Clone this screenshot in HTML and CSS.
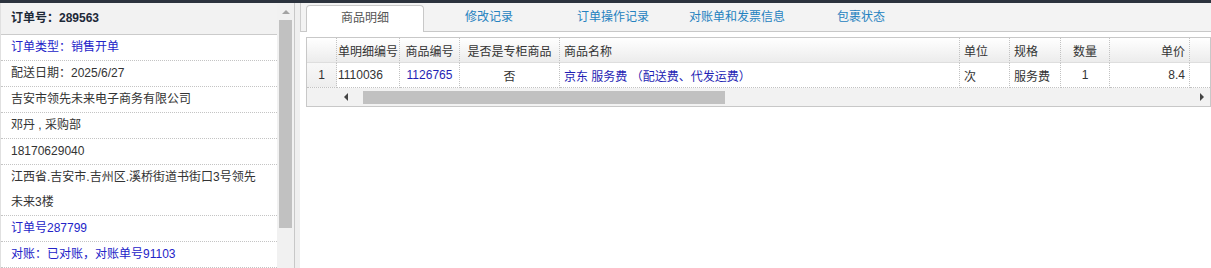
FILE: index.html
```html
<!DOCTYPE html>
<html lang="zh-CN">
<head>
  <meta charset="UTF-8" />
  <title>订单详情</title>
  <link rel="stylesheet" href="styles.css">
</head>
<body>
  <div class="topbar"></div>
  <div class="page">
    <aside class="side">
      <div class="info">
        <div class="info-head">订单号：289563</div>
        <div class="info-row link">订单类型：销售开单</div>
        <div class="info-row">配送日期：2025/6/27</div>
        <div class="info-row">吉安市领先未来电子商务有限公司</div>
        <div class="info-row">邓丹 , 采购部</div>
        <div class="info-row">18170629040</div>
        <div class="info-row">江西省.吉安市.吉州区.溪桥街道书街口3号领先未来3楼</div>
        <div class="info-row link">订单号287799</div>
        <div class="info-row link">对账：已对账，对账单号91103</div>
      </div>
      <div class="vscroll">
        <span class="arrow-up"></span>
        <div class="vthumb"></div>
      </div>
    </aside>
    <div class="splitter"></div>
    <main class="main">
      <ul class="tabs">
        <li class="active">商品明细</li>
        <li>修改记录</li>
        <li>订单操作记录</li>
        <li>对账单和发票信息</li>
        <li>包裹状态</li>
      </ul>

      <div class="grid">
        <table>
          <colgroup>
            <col class="w-rn"><col class="w-63"><col class="w-60"><col class="w-100">
            <col class="w-400"><col class="w-50"><col class="w-51"><col class="w-49">
            <col class="w-80"><col>
          </colgroup>
          <thead>
            <tr>
              <th class="rn"></th>
              <th class="clip">单明细编号</th>
              <th class="center">商品编号</th>
              <th class="center">是否是专柜商品</th>
              <th>商品名称</th>
              <th>单位</th>
              <th>规格</th>
              <th class="center">数量</th>
              <th class="right">单价</th>
              <th class="filler"></th>
            </tr>
          </thead>
          <tbody>
            <tr>
              <td class="rn">1</td>
              <td class="clip">1110036</td>
              <td class="center link">1126765</td>
              <td class="center">否</td>
              <td class="link">京东 服务费 （配送费、代发运费）</td>
              <td>次</td>
              <td>服务费</td>
              <td class="center">1</td>
              <td class="right">8.4</td>
              <td class="filler"></td>
            </tr>
          </tbody>
        </table>
        <div class="hscroll">
          <div class="hs-gap"></div>
          <div class="hs-btn"><span class="arrow-left"></span></div>
          <div class="hs-track"><div class="hthumb"></div></div>
          <div class="hs-btn"><span class="arrow-right"></span></div>
        </div>
      </div>
    </main>
  </div>
</body>
</html>
```

FILE: styles.css
```css
body {
  margin: 0;
  font-family: "Liberation Sans", "Noto Sans CJK SC", sans-serif;
  font-size: 12px;
  color: #333;
  background: #fff;
  overflow: hidden;
}
.topbar {
  height: 3px;
  background: #2c333e;
}
.page {
  display: flex;
  height: 265px;
}

/* left info panel */
.side {
  display: flex;
  width: 294px;
}
.info {
  width: 277px;
  box-sizing: border-box;
  border-left: 1px solid #e0e0e0;
}
.info-head {
  height: 31px;
  line-height: 31px;
  padding: 0 10px;
  background: #f2f2f2;
  border-bottom: 1px solid #cbcbcb;
  font-weight: bold;
  color: #1d2938;
}
.info-row {
  line-height: 25px;
  padding: 0 11px 0 10px;
  border-bottom: 1px dotted #c4c4c4;
}
.link {
  color: #2323c8;
}
.vscroll {
  width: 17px;
  background: #f1f1f1;
  display: flex;
  flex-direction: column;
  align-items: center;
}
.arrow-up {
  margin-top: 7px;
  width: 0;
  height: 0;
  border-left: 4px solid transparent;
  border-right: 4px solid transparent;
  border-bottom: 4px solid #a3a3a3;
}
.vthumb {
  margin-top: 6px;
  width: 13px;
  height: 208px;
  background: #c1c1c1;
}
.splitter {
  width: 6px;
  box-sizing: border-box;
  border-left: 1px solid #c8c8c8;
  background: #efefef;
}

/* main area */
.main {
  flex: 1;
}
.tabs {
  display: flex;
  align-items: flex-end;
  height: 28px;
  margin: 0;
  padding: 0 0 0 5px;
  list-style: none;
  background: #f3f3f3;
  border-left: 1px solid #cdcdcd;
  border-bottom: 1px solid #c8c8c8;
}
.tabs li {
  width: 118px;
  height: 27px;
  box-sizing: border-box;
  margin: 0 6px -1px 0;
  line-height: 24px;
  text-align: center;
  color: #2582c0;
  cursor: pointer;
}
.tabs li.active {
  background: #fff;
  color: #555;
  border: 1px solid #c8c8c8;
  border-bottom: none;
  border-radius: 4px 4px 0 0;
}

.grid {
  margin: 5px 0 0 6px;
  border: 1px solid #c8c8c8;
}
.grid table {
  width: 100%;
  border-collapse: separate;
  border-spacing: 0;
  table-layout: fixed;
}
.w-rn { width: 30px; }
.w-63 { width: 63px; }
.w-60 { width: 60px; }
.w-100 { width: 100px; }
.w-400 { width: 400px; }
.w-50 { width: 50px; }
.w-51 { width: 51px; }
.w-49 { width: 49px; }
.w-80 { width: 80px; }
.grid th,
.grid td {
  height: 24px;
  padding: 0 4px;
  text-align: left;
  white-space: nowrap;
  overflow: hidden;
  border-right: 1px dotted #c2c2c2;
}
.grid th {
  font-weight: normal;
  color: #333;
  background: linear-gradient(#fff, #ececec);
  border-bottom: 1px solid #dedede;
}
.grid td {
  border-bottom: 1px dotted #c2c2c2;
}
.grid td.rn {
  background: linear-gradient(#f8f8f8, #eeeeee);
}
.grid .rn,
.grid .center {
  text-align: center;
}
.grid .right {
  text-align: right;
}
.grid .clip {
  padding: 0 0 0 1px;
}
.grid .filler {
  border-right: none;
}
.grid td.link {
  color: #1f1fb4;
}

.hscroll {
  display: flex;
  height: 18px;
  background: #f2f2f2;
}
.hs-gap {
  width: 30px;
}
.hs-btn {
  width: 17px;
  display: flex;
  align-items: center;
  justify-content: center;
}
.hs-track {
  flex: 1;
}
.hthumb {
  margin: 3px 0 0 9px;
  width: 362px;
  height: 13px;
  background: #c1c1c1;
}
.arrow-left {
  width: 0;
  height: 0;
  border-top: 4px solid transparent;
  border-bottom: 4px solid transparent;
  border-right: 4px solid #444;
}
.arrow-right {
  width: 0;
  height: 0;
  border-top: 4px solid transparent;
  border-bottom: 4px solid transparent;
  border-left: 4px solid #444;
}
```
